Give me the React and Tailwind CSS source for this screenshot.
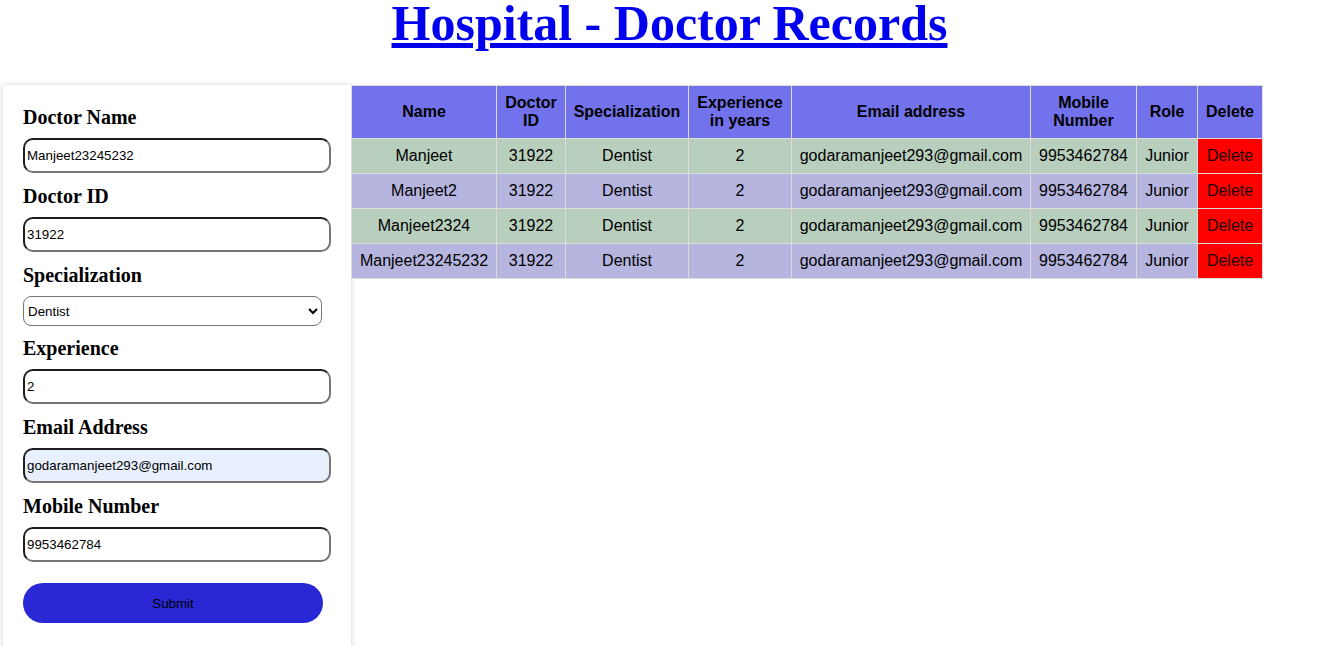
import React, { useState } from "react";

const doctors = [
  { name: "Manjeet", id: "31922", spec: "Dentist", exp: "2", email: "godaramanjeet293@gmail.com", mobile: "9953462784", role: "Junior" },
  { name: "Manjeet2", id: "31922", spec: "Dentist", exp: "2", email: "godaramanjeet293@gmail.com", mobile: "9953462784", role: "Junior" },
  { name: "Manjeet2324", id: "31922", spec: "Dentist", exp: "2", email: "godaramanjeet293@gmail.com", mobile: "9953462784", role: "Junior" },
  { name: "Manjeet23245232", id: "31922", spec: "Dentist", exp: "2", email: "godaramanjeet293@gmail.com", mobile: "9953462784", role: "Junior" },
];

const inputCls =
  "block w-full h-[35px] mt-[9px] mb-[12px] rounded-[10px] border-2 border-t-[#1e1e1e] border-l-[#1e1e1e] border-b-[#767676] border-r-[#767676] px-[2px] text-[13.33px] text-black outline-none font-['Liberation_Sans',Arial,sans-serif]";

const labelCls = "block text-[20px] leading-[23px] font-bold text-black font-['Liberation_Serif','Times_New_Roman',serif]";

export default function App() {
  const [form, setForm] = useState({
    nama: "Manjeet23245232",
    id: "31922",
    spec: "Dentist",
    exp: "2",
    email: "godaramanjeet293@gmail.com",
    mobile: "9953462784",
  });
  const [rows, setRows] = useState(doctors);

  const handleChange = (e) => {
    const { name, value } = e.target;
    setForm((prev) => ({ ...prev, [name]: value }));
  };

  const handleDelete = (i) => setRows((prev) => prev.filter((_, idx) => idx !== i));

  return (
    <div className="min-h-screen bg-white font-['Liberation_Sans',Arial,sans-serif]">
      {/* Judul */}
      <h1 className="pl-[6px] text-center text-[50px] leading-[46px] font-bold text-[#0000ee] underline font-['Liberation_Serif','Times_New_Roman',serif]">
        Hospital - Doctor Records
      </h1>

      <div className="flex items-start pl-[3px] mt-[39px]">
        {/* Form */}
        <form
          className="w-[348px] shrink-0 bg-white px-[20px] pt-[21px] pb-[40px] shadow-[0_0_6px_rgba(0,0,0,0.18)]"
          onSubmit={(e) => e.preventDefault()}
        >
          <label className={labelCls}>Doctor Name</label>
          <input name="nama" value={form.nama} onChange={handleChange} className={`${inputCls} bg-white`} />

          <label className={labelCls}>Doctor ID</label>
          <input name="id" value={form.id} onChange={handleChange} className={`${inputCls} bg-white`} />

          <label className={labelCls}>Specialization</label>
          <select
            name="spec"
            value={form.spec}
            onChange={handleChange}
            className="block w-[299px] h-[30px] mt-[9px] mb-[11px] rounded-lg border border-[#767676] bg-white pl-0 text-[13.33px] text-black font-['Liberation_Sans',Arial,sans-serif]"
          >
            <option>Dentist</option>
            <option>Surgeon</option>
            <option>Cardiologist</option>
          </select>

          <label className={labelCls}>Experience</label>
          <input name="exp" value={form.exp} onChange={handleChange} className={`${inputCls} bg-white`} />

          <label className={labelCls}>Email Address</label>
          <input name="email" value={form.email} onChange={handleChange} className={`${inputCls} bg-[#e8f0fe]`} />

          <label className={labelCls}>Mobile Number</label>
          <input name="mobile" value={form.mobile} onChange={handleChange} className={`${inputCls} bg-white`} />

          <button
            type="submit"
            className="block w-[300px] h-[40px] mt-[21px] pt-[1px] rounded-full bg-[#2a27d4] text-[13.33px] text-black font-['Liberation_Sans',Arial,sans-serif]"
          >
            Submit
          </button>
        </form>

        {/* Tabel */}
        <table className="w-[911px] table-fixed border-collapse border border-[#dcdcdc] text-[16px] text-black text-center">
          <colgroup>
            <col className="w-[145px]" />
            <col className="w-[69px]" />
            <col className="w-[123px]" />
            <col className="w-[103px]" />
            <col className="w-[239px]" />
            <col className="w-[106px]" />
            <col className="w-[61px]" />
            <col className="w-[65px]" />
          </colgroup>
          <thead>
            <tr className="bg-[#7272ec]">
              {["Name", "Doctor ID", "Specialization", "Experience in years", "Email address", "Mobile Number", "Role", "Delete"].map((h) => (
                <th key={h} className="border border-[#dcdcdc] px-[4px] py-2 font-bold leading-[18px]">
                  {h}
                </th>
              ))}
            </tr>
          </thead>
          <tbody>
            {rows.map((d, i) => (
              <tr key={i} className={i % 2 === 0 ? "bg-[#b8cfbe]" : "bg-[#b5b5df]"}>
                <td className="border border-[#dcdcdc] px-1 py-2 leading-[18px] whitespace-nowrap">{d.name}</td>
                <td className="border border-[#dcdcdc] px-1 py-2 leading-[18px]">{d.id}</td>
                <td className="border border-[#dcdcdc] px-1 py-2 leading-[18px]">{d.spec}</td>
                <td className="border border-[#dcdcdc] px-1 py-2 leading-[18px]">{d.exp}</td>
                <td className="border border-[#dcdcdc] px-1 py-2 leading-[18px] whitespace-nowrap">{d.email}</td>
                <td className="border border-[#dcdcdc] px-1 py-2 leading-[18px]">{d.mobile}</td>
                <td className="border border-[#dcdcdc] px-1 py-2 leading-[18px]">{d.role}</td>
                <td
                  className="border border-[#dcdcdc] px-1 py-2 leading-[18px] bg-[#ff0000] text-[#1a0000] cursor-pointer"
                  onClick={() => handleDelete(i)}
                >
                  Delete
                </td>
              </tr>
            ))}
          </tbody>
        </table>
      </div>
    </div>
  );
}
